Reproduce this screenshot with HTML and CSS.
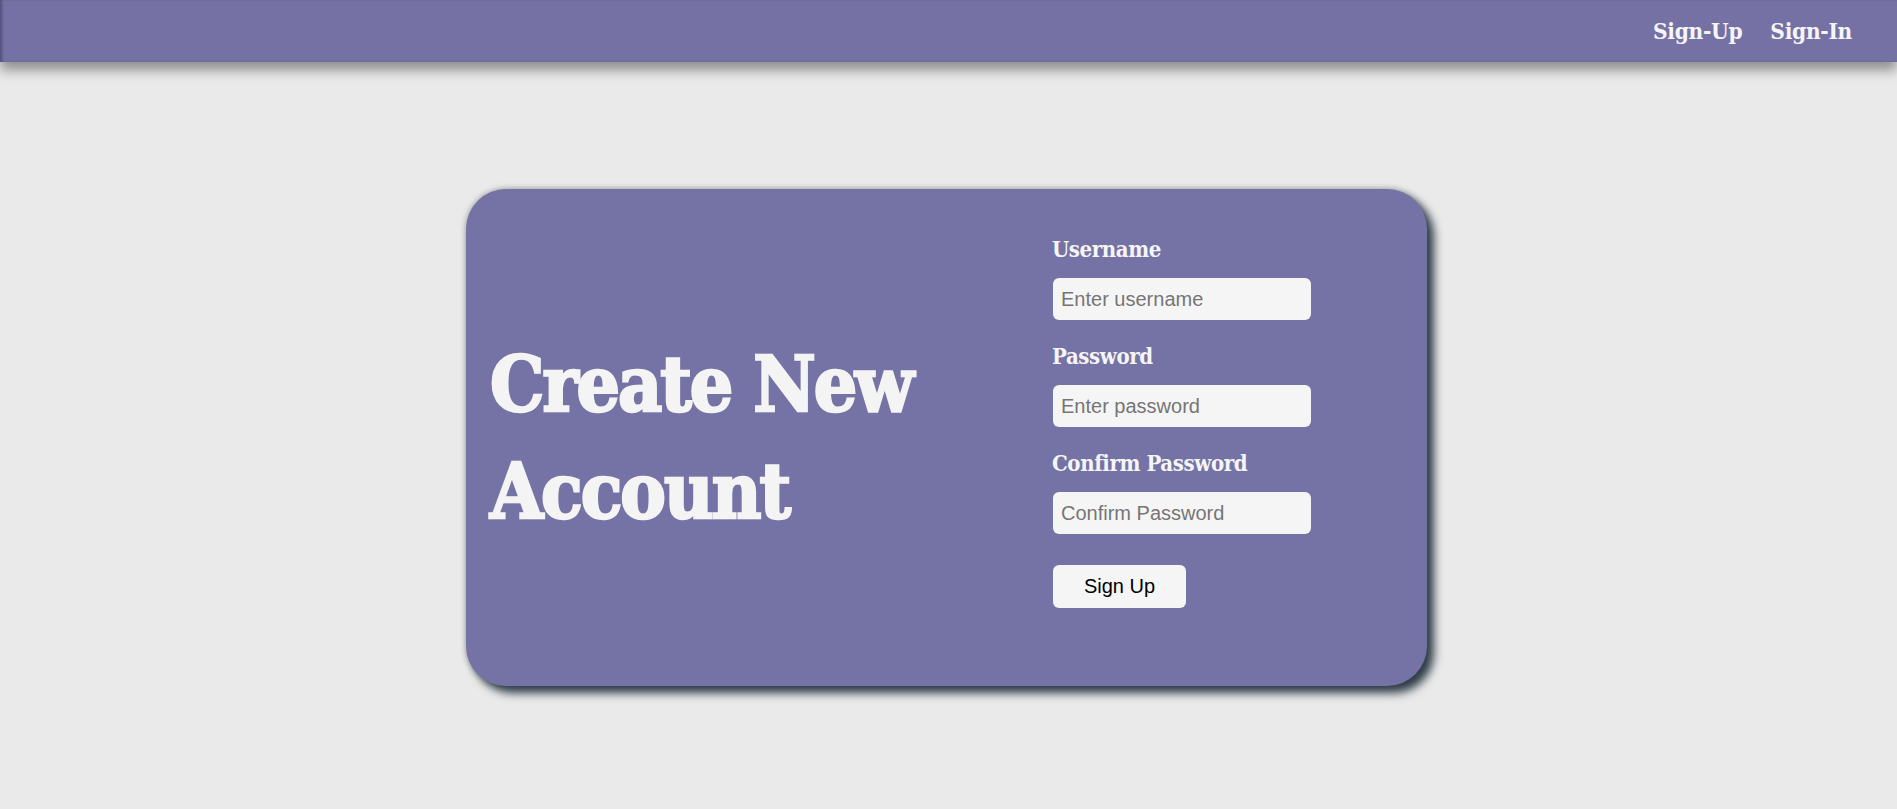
FILE: index.html
```html
<!DOCTYPE html>
<html>
<head>
<meta charset="utf-8">
<link rel="stylesheet" href="styles.css">
</head>
<body>
<header class="topbar">
  <nav class="nav">
    <a class="nav-link" href="#">Sign-Up</a>
    <a class="nav-link" href="#">Sign-In</a>
  </nav>
</header>
<main class="main">
  <section class="card">
    <div class="card-left">
      <h1 class="title">Create New Account</h1>
    </div>
    <form class="form">
      <label class="label" for="u">Username</label>
      <input class="input" id="u" type="text" placeholder="Enter username">
      <label class="label" for="p">Password</label>
      <input class="input" id="p" type="password" placeholder="Enter password">
      <label class="label" for="c">Confirm Password</label>
      <input class="input" id="c" type="password" placeholder="Confirm Password">
      <button class="btn" type="button">Sign Up</button>
    </form>
  </section>
</main>
</body>
</html>
```
FILE: styles.css
```css
html, body {
  margin: 0;
  padding: 0;
}
body {
  background: #eaeaea;
  font-family: "DejaVu Serif", serif;
  height: 809px;
  overflow: hidden;
}
.topbar {
  height: 62px;
  background: #7571a5;
  box-shadow: 0 8px 12px rgba(0,0,0,0.4), inset 3px 0 3px -1px rgba(40,40,70,0.45);
  display: flex;
  justify-content: flex-end;
  align-items: center;
  position: relative;
  z-index: 1;
}
.nav {
  display: flex;
  gap: 28px;
  padding-right: 45px;
}
.nav-link {
  color: #f5f5f5;
  text-decoration: none;
  font-family: "DejaVu Serif Condensed", "DejaVu Serif", serif;
  font-weight: bold;
  font-size: 22.5px;
  letter-spacing: -0.3px;
}
.main {
  display: flex;
  justify-content: center;
  padding-top: 127px;
  padding-right: 4px;
}
.card {
  width: 961px;
  height: 497px;
  box-sizing: border-box;
  background: #7572a6;
  border-radius: 40px;
  box-shadow: 7px 7px 10px #2f3d48, 0 0 6px rgba(0,0,0,0.35);
  display: grid;
  grid-template-columns: 586px 1fr;
  align-items: center;
}
.card-left {
  padding-left: 24px;
}
.title {
  margin: 0;
  color: #f4f4f4;
  font-family: "DejaVu Serif Condensed", "DejaVu Serif", serif;
  font-weight: 900;
  font-size: 76px;
  line-height: 107px;
  letter-spacing: -2px;
  width: 500px;
  -webkit-text-stroke: 2.5px #f4f4f4;
}
.form {
  display: flex;
  flex-direction: column;
  align-items: flex-start;
  padding-bottom: 30px;
}
.label {
  color: #f5f5f5;
  font-family: "DejaVu Serif Condensed", "DejaVu Serif", serif;
  font-weight: bold;
  font-size: 22px;
  line-height: 24px;
  letter-spacing: -0.4px;
  margin-bottom: 16px;
}
.input {
  width: 258px;
  height: 42px;
  box-sizing: border-box;
  border: none;
  border-radius: 6px;
  background: #f5f5f5;
  padding: 0 8px;
  font-family: "Liberation Sans", Arial, sans-serif;
  font-size: 20px;
  color: #333;
  margin: 1px 0 24px 1px;
  outline: none;
}
.input::placeholder {
  color: #757575;
}
.btn {
  margin: 7px 0 0 1px;
  width: 133px;
  height: 43px;
  border: none;
  border-radius: 6px;
  background: #f5f5f5;
  font-family: "Liberation Sans", Arial, sans-serif;
  font-size: 20px;
  color: #000;
}
```
